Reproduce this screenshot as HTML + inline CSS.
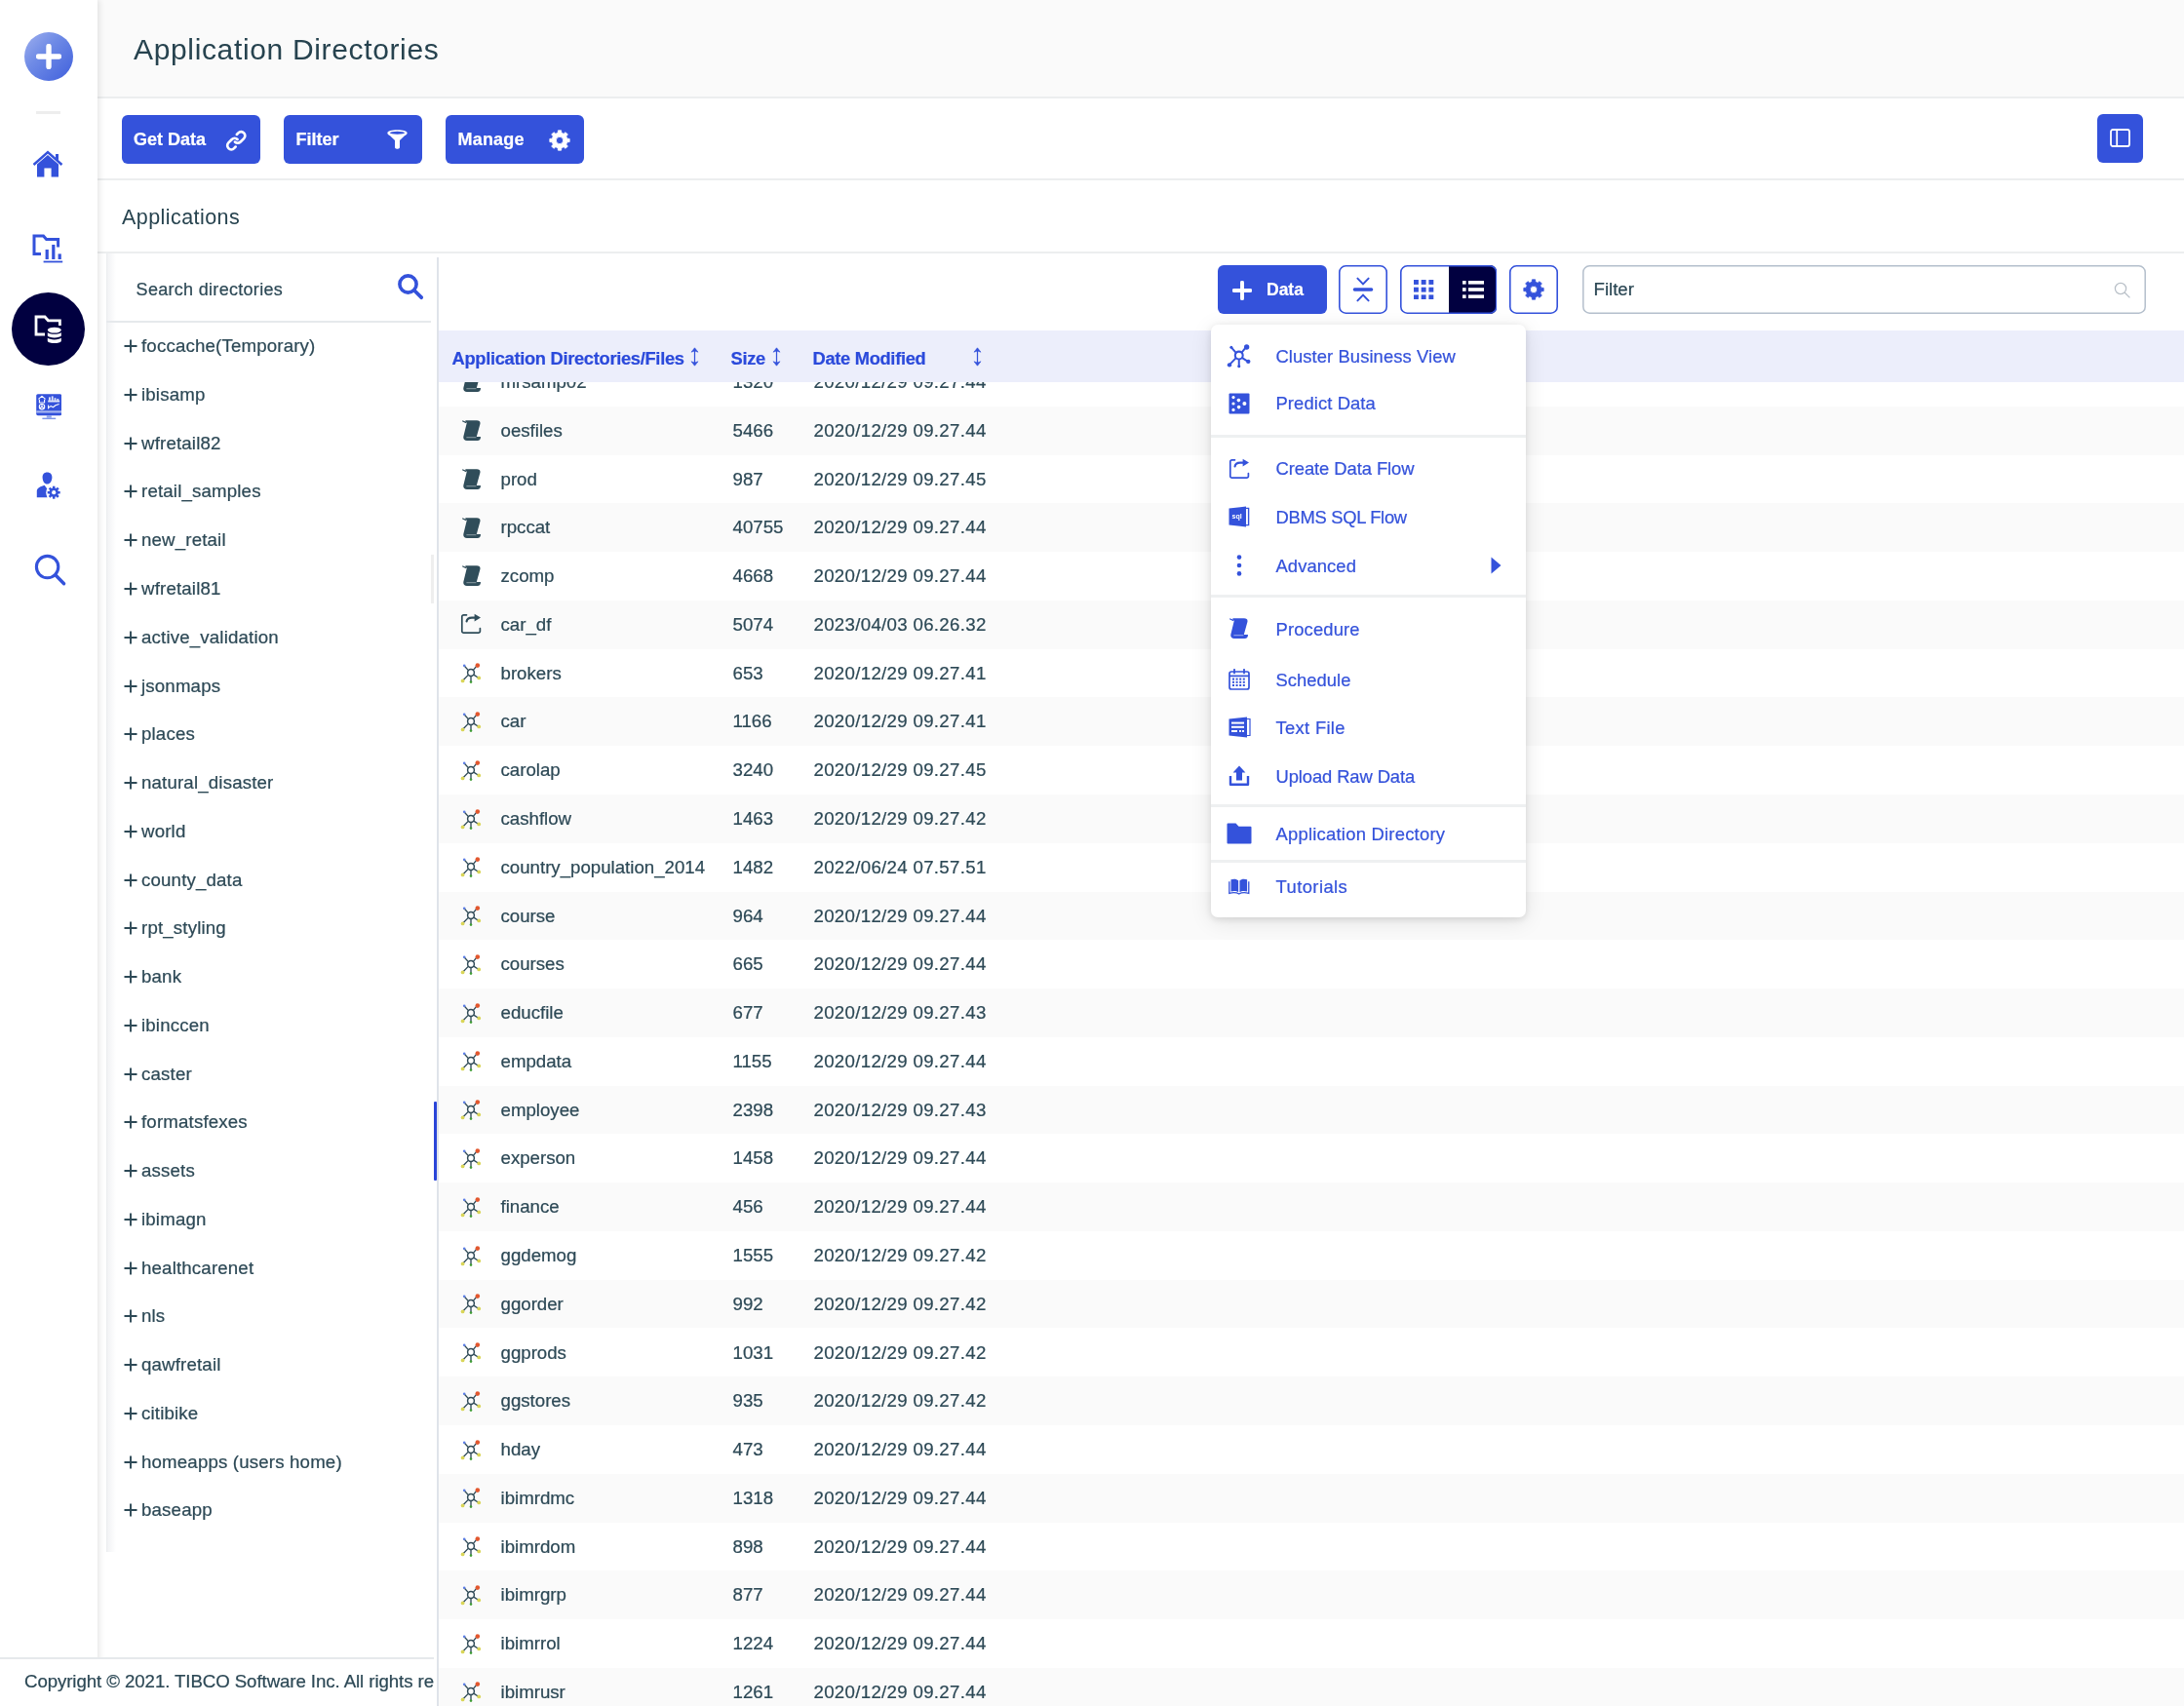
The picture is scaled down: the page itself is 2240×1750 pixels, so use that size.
<!DOCTYPE html><html><head><meta charset="utf-8"><title>Application Directories</title><style>

*{box-sizing:border-box;margin:0;padding:0}
html,body{width:2240px;height:1750px;overflow:hidden;background:#fff}
body{position:relative;will-change:transform;-webkit-text-stroke:0.22px;font-family:"Liberation Sans",sans-serif;color:#2d4956;font-size:18px}
.abs{position:absolute}
#side{left:0;top:0;width:100px;height:1750px;background:#fff;box-shadow:2px 0 6px rgba(0,0,0,.10);z-index:5}
#hdr{left:100px;top:0;width:2140px;height:101px;background:#fafafa;border-bottom:2px solid #eceeef}
#hdr h1{-webkit-text-stroke:0;position:absolute;left:37px;top:33px;font-weight:400;font-size:30px;line-height:36px;color:#27434f;letter-spacing:0.65px;white-space:nowrap}
#tb{left:100px;top:101px;width:2140px;height:84px;border-bottom:2px solid #eceeef;background:#fff}
.bbtn{position:absolute;top:17px;height:50px;width:142px;border-radius:6px;background:#3452db;color:#fff;font-weight:700;font-size:18px;line-height:51px;padding-left:12.5px;white-space:nowrap}
.bbtn svg{position:absolute;right:12px;top:13px}
#apps{left:100px;top:185px;width:2140px;height:75px;border-bottom:2px solid #eceeef;background:#fff}
#apps span{-webkit-text-stroke:0;position:absolute;left:25px;top:24px;font-size:21.5px;line-height:28px;white-space:nowrap;letter-spacing:0.43px;color:#27434f}
#tree{left:109px;top:260px;width:338px;height:1332px;background:#fff;border-left:1px solid #eceef0;background:linear-gradient(90deg,#f1f2f4 0,#fff 9px)}
#srch{position:absolute;left:-1px;top:0;width:333px;height:71px;border-bottom:2px solid #e6e9ec}
#srch span{position:absolute;left:30.6px;top:24.7px;font-size:18px;line-height:24px;white-space:nowrap;letter-spacing:0.3px}
.ti{position:absolute;left:17px;height:30px;line-height:30px;font-size:18.67px;white-space:nowrap;letter-spacing:0.17px}
.ti svg{position:absolute;left:0;top:8px}
.ti b{font-weight:400;position:absolute;left:18px;top:0}
#vdiv{left:448px;top:264px;width:2px;height:1486px;background:#dfe3ea}
#hand{left:444.5px;top:1130px;width:3.5px;height:81px;background:#2a45d8;border-radius:1px}
#thumb{left:441.5px;top:569px;width:3.5px;height:50px;background:#eeeeee}
#tbl{left:450px;top:339px;width:1790px;height:1411px;overflow:hidden}
#th{position:absolute;left:0;top:0;width:1790px;height:52.5px;background:#eceefb;z-index:2;color:#2b4adb;font-weight:700;font-size:18.3px;letter-spacing:-0.3px}
#th span{position:absolute;top:17px;line-height:24px;white-space:nowrap}
#th .sort{position:absolute;top:16.8px}
.r{position:absolute;left:0;width:1790px;height:49.77px;font-size:18.67px}
.r.g{background:#fafafa}
.r span{position:absolute;top:0;line-height:49.77px;white-space:nowrap}
.r .ic{position:absolute}
.c1{left:63.5px} .c2{left:301.5px} .c3{left:384.5px;letter-spacing:0.31px}
#foot{left:0;top:1699.5px;width:445px;height:51px;background:#fff;border-top:2px solid #e6e9ec;z-index:6;overflow:hidden}
#foot span{position:absolute;left:25px;top:12.6px;font-size:18.67px;line-height:22px;white-space:nowrap;letter-spacing:-0.08px}
.tbtn{position:absolute;top:272px;height:50px;border-radius:6px}
#menu{left:1241.5px;top:333px;width:323.5px;height:607.5px;background:#fff;border-radius:7px;box-shadow:0 4px 22px rgba(0,0,0,.10),0 2px 7px rgba(0,0,0,.10);z-index:10;color:#3452db;font-size:18.4px}
#menu .mi{position:absolute;left:67px;line-height:26px;white-space:nowrap}
#menu .sep{position:absolute;left:0;width:100%;height:3px;background:#eef0f1}
#menu svg{position:absolute}

</style></head><body>
<div id="hdr" class="abs"><h1>Application Directories</h1></div>
<div id="tb" class="abs">
<div class="bbtn" style="left:24.5px">Get Data<svg width="22.5" height="22.5" viewBox="0 0 26 26" style="top:14.5px;right:13.5px"><g fill="none" stroke="#fff" stroke-width="3.1" stroke-linecap="round"><path d="M11.5 14.5 a4.6 4.6 0 0 0 6.6 0 l4 -4 a4.6 4.6 0 0 0 -6.6 -6.6 l-1.8 1.8"/><path d="M14.5 11.5 a4.6 4.6 0 0 0 -6.6 0 l-4 4 a4.6 4.6 0 0 0 6.6 6.6 l1.8 -1.8"/></g></svg></div>
<div class="bbtn" style="left:191px">Filter<svg width="23" height="22" viewBox="0 0 26 26" preserveAspectRatio="none" style="top:14px;right:14px"><path fill="#fff" d="M1.5 5.2 C1.5 2.6 6.6 1.4 13 1.4 S24.5 2.6 24.5 5.2 C24.5 6.6 23 7.6 21.4 8.6 L15.8 14.2 V22.6 C15.8 23.8 14.8 24.6 13.6 24.6 H12.4 C11.2 24.6 10.2 23.8 10.2 22.6 V14.2 L4.6 8.6 C3 7.6 1.5 6.6 1.5 5.2 Z"/><ellipse cx="13" cy="5" rx="8.6" ry="1.7" fill="#3452db"/></svg></div>
<div class="bbtn" style="left:357px;letter-spacing:0.2px">Manage<svg class="abs" style="left:105.8px;top:14.5px" width="22" height="22" viewBox="0 0 22 22"><path fill="#fff" fill-rule="evenodd" stroke="#fff" stroke-width="0.8" stroke-linejoin="round" d="M9.15 3.30 L9.39 0.83 L12.61 0.83 L12.85 3.30 L15.14 4.25 L17.05 2.67 L19.33 4.95 L17.75 6.86 L18.70 9.15 L21.17 9.39 L21.17 12.61 L18.70 12.85 L17.75 15.14 L19.33 17.05 L17.05 19.33 L15.14 17.75 L12.85 18.70 L12.61 21.17 L9.39 21.17 L9.15 18.70 L6.86 17.75 L4.95 19.33 L2.67 17.05 L4.25 15.14 L3.30 12.85 L0.83 12.61 L0.83 9.39 L3.30 9.15 L4.25 6.86 L2.67 4.95 L4.95 2.67 L6.86 4.25 Z M7.36 11.00 a3.638 3.638 0 1 0 7.276 0 a3.638 3.638 0 1 0 -7.276 0 Z"/></svg></div>
<div class="abs" style="left:2051px;top:16px;width:47px;height:50px;border-radius:6px;background:#3452db"><svg class="abs" style="left:13px;top:15px" width="21" height="19" viewBox="0 0 21 19"><rect x="1" y="1" width="19" height="17" rx="2" fill="none" stroke="#fff" stroke-width="1.8"/><path d="M7.2 1 V18" stroke="#fff" stroke-width="1.8"/></svg></div>
</div>
<div id="apps" class="abs"><span>Applications</span></div>
<div id="tree" class="abs">
<div id="srch"><span>Search directories</span><svg class="abs" style="left:297.6px;top:19.8px" width="28" height="28" viewBox="0 0 28 28"><circle cx="11.5" cy="11.5" r="8.6" fill="none" stroke="#3452db" stroke-width="3.6"/><path d="M18 18 L25.2 25.2" stroke="#3452db" stroke-width="3.8" stroke-linecap="round"/></svg></div>
<div class="ti" style="top:80.2px"><svg width="14" height="14" viewBox="0 0 14 14"><path d="M7 0.5 V13.5 M0.5 7 H13.5" stroke="#2d4956" stroke-width="1.9" fill="none"/></svg><b>foccache(Temporary)</b></div>
<div class="ti" style="top:129.9px"><svg width="14" height="14" viewBox="0 0 14 14"><path d="M7 0.5 V13.5 M0.5 7 H13.5" stroke="#2d4956" stroke-width="1.9" fill="none"/></svg><b>ibisamp</b></div>
<div class="ti" style="top:179.7px"><svg width="14" height="14" viewBox="0 0 14 14"><path d="M7 0.5 V13.5 M0.5 7 H13.5" stroke="#2d4956" stroke-width="1.9" fill="none"/></svg><b>wfretail82</b></div>
<div class="ti" style="top:229.4px"><svg width="14" height="14" viewBox="0 0 14 14"><path d="M7 0.5 V13.5 M0.5 7 H13.5" stroke="#2d4956" stroke-width="1.9" fill="none"/></svg><b>retail_samples</b></div>
<div class="ti" style="top:279.2px"><svg width="14" height="14" viewBox="0 0 14 14"><path d="M7 0.5 V13.5 M0.5 7 H13.5" stroke="#2d4956" stroke-width="1.9" fill="none"/></svg><b>new_retail</b></div>
<div class="ti" style="top:329.0px"><svg width="14" height="14" viewBox="0 0 14 14"><path d="M7 0.5 V13.5 M0.5 7 H13.5" stroke="#2d4956" stroke-width="1.9" fill="none"/></svg><b>wfretail81</b></div>
<div class="ti" style="top:378.7px"><svg width="14" height="14" viewBox="0 0 14 14"><path d="M7 0.5 V13.5 M0.5 7 H13.5" stroke="#2d4956" stroke-width="1.9" fill="none"/></svg><b>active_validation</b></div>
<div class="ti" style="top:428.5px"><svg width="14" height="14" viewBox="0 0 14 14"><path d="M7 0.5 V13.5 M0.5 7 H13.5" stroke="#2d4956" stroke-width="1.9" fill="none"/></svg><b>jsonmaps</b></div>
<div class="ti" style="top:478.2px"><svg width="14" height="14" viewBox="0 0 14 14"><path d="M7 0.5 V13.5 M0.5 7 H13.5" stroke="#2d4956" stroke-width="1.9" fill="none"/></svg><b>places</b></div>
<div class="ti" style="top:528.0px"><svg width="14" height="14" viewBox="0 0 14 14"><path d="M7 0.5 V13.5 M0.5 7 H13.5" stroke="#2d4956" stroke-width="1.9" fill="none"/></svg><b>natural_disaster</b></div>
<div class="ti" style="top:577.7px"><svg width="14" height="14" viewBox="0 0 14 14"><path d="M7 0.5 V13.5 M0.5 7 H13.5" stroke="#2d4956" stroke-width="1.9" fill="none"/></svg><b>world</b></div>
<div class="ti" style="top:627.5px"><svg width="14" height="14" viewBox="0 0 14 14"><path d="M7 0.5 V13.5 M0.5 7 H13.5" stroke="#2d4956" stroke-width="1.9" fill="none"/></svg><b>county_data</b></div>
<div class="ti" style="top:677.2px"><svg width="14" height="14" viewBox="0 0 14 14"><path d="M7 0.5 V13.5 M0.5 7 H13.5" stroke="#2d4956" stroke-width="1.9" fill="none"/></svg><b>rpt_styling</b></div>
<div class="ti" style="top:727.0px"><svg width="14" height="14" viewBox="0 0 14 14"><path d="M7 0.5 V13.5 M0.5 7 H13.5" stroke="#2d4956" stroke-width="1.9" fill="none"/></svg><b>bank</b></div>
<div class="ti" style="top:776.7px"><svg width="14" height="14" viewBox="0 0 14 14"><path d="M7 0.5 V13.5 M0.5 7 H13.5" stroke="#2d4956" stroke-width="1.9" fill="none"/></svg><b>ibinccen</b></div>
<div class="ti" style="top:826.5px"><svg width="14" height="14" viewBox="0 0 14 14"><path d="M7 0.5 V13.5 M0.5 7 H13.5" stroke="#2d4956" stroke-width="1.9" fill="none"/></svg><b>caster</b></div>
<div class="ti" style="top:876.2px"><svg width="14" height="14" viewBox="0 0 14 14"><path d="M7 0.5 V13.5 M0.5 7 H13.5" stroke="#2d4956" stroke-width="1.9" fill="none"/></svg><b>formatsfexes</b></div>
<div class="ti" style="top:926.0px"><svg width="14" height="14" viewBox="0 0 14 14"><path d="M7 0.5 V13.5 M0.5 7 H13.5" stroke="#2d4956" stroke-width="1.9" fill="none"/></svg><b>assets</b></div>
<div class="ti" style="top:975.7px"><svg width="14" height="14" viewBox="0 0 14 14"><path d="M7 0.5 V13.5 M0.5 7 H13.5" stroke="#2d4956" stroke-width="1.9" fill="none"/></svg><b>ibimagn</b></div>
<div class="ti" style="top:1025.5px"><svg width="14" height="14" viewBox="0 0 14 14"><path d="M7 0.5 V13.5 M0.5 7 H13.5" stroke="#2d4956" stroke-width="1.9" fill="none"/></svg><b>healthcarenet</b></div>
<div class="ti" style="top:1075.2px"><svg width="14" height="14" viewBox="0 0 14 14"><path d="M7 0.5 V13.5 M0.5 7 H13.5" stroke="#2d4956" stroke-width="1.9" fill="none"/></svg><b>nls</b></div>
<div class="ti" style="top:1125.0px"><svg width="14" height="14" viewBox="0 0 14 14"><path d="M7 0.5 V13.5 M0.5 7 H13.5" stroke="#2d4956" stroke-width="1.9" fill="none"/></svg><b>qawfretail</b></div>
<div class="ti" style="top:1174.7px"><svg width="14" height="14" viewBox="0 0 14 14"><path d="M7 0.5 V13.5 M0.5 7 H13.5" stroke="#2d4956" stroke-width="1.9" fill="none"/></svg><b>citibike</b></div>
<div class="ti" style="top:1224.5px"><svg width="14" height="14" viewBox="0 0 14 14"><path d="M7 0.5 V13.5 M0.5 7 H13.5" stroke="#2d4956" stroke-width="1.9" fill="none"/></svg><b>homeapps (users home)</b></div>
<div class="ti" style="top:1274.2px"><svg width="14" height="14" viewBox="0 0 14 14"><path d="M7 0.5 V13.5 M0.5 7 H13.5" stroke="#2d4956" stroke-width="1.9" fill="none"/></svg><b>baseapp</b></div>
</div>
<div id="vdiv" class="abs"></div><div id="hand" class="abs"></div><div id="thumb" class="abs"></div>
<div id="tbl" class="abs">
<div id="th"><span style="left:13.5px">Application Directories/Files</span><svg class="sort" style="left:258.1px" width="9" height="20" viewBox="0 0 9 20"><path fill="none" stroke="#3452db" stroke-width="1.25" d="M4.5 2 V18"/><path fill="#3452db" stroke="#3452db" stroke-width="0.6" stroke-linejoin="round" d="M4.5 0.8 L8 5.2 L4.5 3.9 L1 5.2 Z M4.5 19.2 L8 14.8 L4.5 16.1 L1 14.8 Z"/></svg><span style="left:299.5px">Size</span><svg class="sort" style="left:341.9px" width="9" height="20" viewBox="0 0 9 20"><path fill="none" stroke="#3452db" stroke-width="1.25" d="M4.5 2 V18"/><path fill="#3452db" stroke="#3452db" stroke-width="0.6" stroke-linejoin="round" d="M4.5 0.8 L8 5.2 L4.5 3.9 L1 5.2 Z M4.5 19.2 L8 14.8 L4.5 16.1 L1 14.8 Z"/></svg><span style="left:383.5px">Date Modified</span><svg class="sort" style="left:547.5px" width="9" height="20" viewBox="0 0 9 20"><path fill="none" stroke="#3452db" stroke-width="1.25" d="M4.5 2 V18"/><path fill="#3452db" stroke="#3452db" stroke-width="0.6" stroke-linejoin="round" d="M4.5 0.8 L8 5.2 L4.5 3.9 L1 5.2 Z M4.5 19.2 L8 14.8 L4.5 16.1 L1 14.8 Z"/></svg></div>
<div class="r" style="top:28.10px"><svg class="ic" style="left:23.5px;top:14.2px" width="19.5" height="21.5" viewBox="0 0 19.5 21.5"><path fill="#304d5a" d="M3.4 0.3 H15 Q19.2 0.3 18.4 4 L14.8 17 H19 Q19 20.9 15.6 20.9 H5 Q0.6 20.9 1.4 16.6 L4.6 3.6 Q5 1.8 3.4 1.7 Z"/><path fill="none" stroke="#304d5a" stroke-width="1.3" stroke-linecap="round" d="M0.7 1.0 L3.8 2.3"/><path fill="none" stroke="#93a4ad" stroke-width="0.9" d="M4.4 17.7 L14.4 17.7"/></svg><span class="c1">mrsamp02</span><span class="c2">1320</span><span class="c3">2020/12/29 09.27.44</span></div>
<div class="r g" style="top:77.87px"><svg class="ic" style="left:23.5px;top:14.2px" width="19.5" height="21.5" viewBox="0 0 19.5 21.5"><path fill="#304d5a" d="M3.4 0.3 H15 Q19.2 0.3 18.4 4 L14.8 17 H19 Q19 20.9 15.6 20.9 H5 Q0.6 20.9 1.4 16.6 L4.6 3.6 Q5 1.8 3.4 1.7 Z"/><path fill="none" stroke="#304d5a" stroke-width="1.3" stroke-linecap="round" d="M0.7 1.0 L3.8 2.3"/><path fill="none" stroke="#93a4ad" stroke-width="0.9" d="M4.4 17.7 L14.4 17.7"/></svg><span class="c1">oesfiles</span><span class="c2">5466</span><span class="c3">2020/12/29 09.27.44</span></div>
<div class="r" style="top:127.64px"><svg class="ic" style="left:23.5px;top:14.2px" width="19.5" height="21.5" viewBox="0 0 19.5 21.5"><path fill="#304d5a" d="M3.4 0.3 H15 Q19.2 0.3 18.4 4 L14.8 17 H19 Q19 20.9 15.6 20.9 H5 Q0.6 20.9 1.4 16.6 L4.6 3.6 Q5 1.8 3.4 1.7 Z"/><path fill="none" stroke="#304d5a" stroke-width="1.3" stroke-linecap="round" d="M0.7 1.0 L3.8 2.3"/><path fill="none" stroke="#93a4ad" stroke-width="0.9" d="M4.4 17.7 L14.4 17.7"/></svg><span class="c1">prod</span><span class="c2">987</span><span class="c3">2020/12/29 09.27.45</span></div>
<div class="r g" style="top:177.41px"><svg class="ic" style="left:23.5px;top:14.2px" width="19.5" height="21.5" viewBox="0 0 19.5 21.5"><path fill="#304d5a" d="M3.4 0.3 H15 Q19.2 0.3 18.4 4 L14.8 17 H19 Q19 20.9 15.6 20.9 H5 Q0.6 20.9 1.4 16.6 L4.6 3.6 Q5 1.8 3.4 1.7 Z"/><path fill="none" stroke="#304d5a" stroke-width="1.3" stroke-linecap="round" d="M0.7 1.0 L3.8 2.3"/><path fill="none" stroke="#93a4ad" stroke-width="0.9" d="M4.4 17.7 L14.4 17.7"/></svg><span class="c1">rpccat</span><span class="c2">40755</span><span class="c3">2020/12/29 09.27.44</span></div>
<div class="r" style="top:227.18px"><svg class="ic" style="left:23.5px;top:14.2px" width="19.5" height="21.5" viewBox="0 0 19.5 21.5"><path fill="#304d5a" d="M3.4 0.3 H15 Q19.2 0.3 18.4 4 L14.8 17 H19 Q19 20.9 15.6 20.9 H5 Q0.6 20.9 1.4 16.6 L4.6 3.6 Q5 1.8 3.4 1.7 Z"/><path fill="none" stroke="#304d5a" stroke-width="1.3" stroke-linecap="round" d="M0.7 1.0 L3.8 2.3"/><path fill="none" stroke="#93a4ad" stroke-width="0.9" d="M4.4 17.7 L14.4 17.7"/></svg><span class="c1">zcomp</span><span class="c2">4668</span><span class="c3">2020/12/29 09.27.44</span></div>
<div class="r g" style="top:276.95px"><svg class="ic" style="left:22px;top:13.4px" width="22" height="22" viewBox="0 0 22 22"><path fill="none" stroke="#304d5a" stroke-width="1.7" stroke-linecap="round" stroke-linejoin="round" d="M6.5 1.8 H3.6 A1.8 1.8 0 0 0 1.8 3.6 V18.4 A1.8 1.8 0 0 0 3.6 20.2 H18.6 A1.8 1.8 0 0 0 20.4 18.4 V15.6"/><path fill="none" stroke="#304d5a" stroke-width="2.2" stroke-linecap="round" d="M6.6 8.4 C7 5.6 9 4.6 12 4.6 H16"/><path fill="#304d5a" d="M14.6 0.8 L21 4.6 L14.6 8.4 Z"/></svg><span class="c1">car_df</span><span class="c2">5074</span><span class="c3">2023/04/03 06.26.32</span></div>
<div class="r" style="top:326.72px"><svg class="ic" style="left:22.2px;top:14.6px" width="22" height="22" viewBox="0 0 22 22"><g stroke="#2f4a57" stroke-width="1.35" stroke-linecap="round" fill="none"><path d="M4.4 3.2 L8.4 7.6 M17.4 2.4 L13.4 7.4 M14.2 12.4 L18.6 15.2 M11 14 L11 19.4 M8 12.6 L2.8 18"/><circle cx="11" cy="10" r="3.4" stroke-width="1.5"/></g><circle cx="4.2" cy="2.8" r="1.3" fill="#5b7de6"/><circle cx="17.8" cy="2.6" r="2.3" fill="#e2572e"/><circle cx="19.2" cy="15.4" r="1.9" fill="#d9d558"/><circle cx="11" cy="19.6" r="1.3" fill="#3f9d36"/><circle cx="2.6" cy="18.4" r="1.9" fill="#d9d558"/></svg><span class="c1">brokers</span><span class="c2">653</span><span class="c3">2020/12/29 09.27.41</span></div>
<div class="r g" style="top:376.49px"><svg class="ic" style="left:22.2px;top:14.6px" width="22" height="22" viewBox="0 0 22 22"><g stroke="#2f4a57" stroke-width="1.35" stroke-linecap="round" fill="none"><path d="M4.4 3.2 L8.4 7.6 M17.4 2.4 L13.4 7.4 M14.2 12.4 L18.6 15.2 M11 14 L11 19.4 M8 12.6 L2.8 18"/><circle cx="11" cy="10" r="3.4" stroke-width="1.5"/></g><circle cx="4.2" cy="2.8" r="1.3" fill="#5b7de6"/><circle cx="17.8" cy="2.6" r="2.3" fill="#e2572e"/><circle cx="19.2" cy="15.4" r="1.9" fill="#d9d558"/><circle cx="11" cy="19.6" r="1.3" fill="#3f9d36"/><circle cx="2.6" cy="18.4" r="1.9" fill="#d9d558"/></svg><span class="c1">car</span><span class="c2">1166</span><span class="c3">2020/12/29 09.27.41</span></div>
<div class="r" style="top:426.26px"><svg class="ic" style="left:22.2px;top:14.6px" width="22" height="22" viewBox="0 0 22 22"><g stroke="#2f4a57" stroke-width="1.35" stroke-linecap="round" fill="none"><path d="M4.4 3.2 L8.4 7.6 M17.4 2.4 L13.4 7.4 M14.2 12.4 L18.6 15.2 M11 14 L11 19.4 M8 12.6 L2.8 18"/><circle cx="11" cy="10" r="3.4" stroke-width="1.5"/></g><circle cx="4.2" cy="2.8" r="1.3" fill="#5b7de6"/><circle cx="17.8" cy="2.6" r="2.3" fill="#e2572e"/><circle cx="19.2" cy="15.4" r="1.9" fill="#d9d558"/><circle cx="11" cy="19.6" r="1.3" fill="#3f9d36"/><circle cx="2.6" cy="18.4" r="1.9" fill="#d9d558"/></svg><span class="c1">carolap</span><span class="c2">3240</span><span class="c3">2020/12/29 09.27.45</span></div>
<div class="r g" style="top:476.03px"><svg class="ic" style="left:22.2px;top:14.6px" width="22" height="22" viewBox="0 0 22 22"><g stroke="#2f4a57" stroke-width="1.35" stroke-linecap="round" fill="none"><path d="M4.4 3.2 L8.4 7.6 M17.4 2.4 L13.4 7.4 M14.2 12.4 L18.6 15.2 M11 14 L11 19.4 M8 12.6 L2.8 18"/><circle cx="11" cy="10" r="3.4" stroke-width="1.5"/></g><circle cx="4.2" cy="2.8" r="1.3" fill="#5b7de6"/><circle cx="17.8" cy="2.6" r="2.3" fill="#e2572e"/><circle cx="19.2" cy="15.4" r="1.9" fill="#d9d558"/><circle cx="11" cy="19.6" r="1.3" fill="#3f9d36"/><circle cx="2.6" cy="18.4" r="1.9" fill="#d9d558"/></svg><span class="c1">cashflow</span><span class="c2">1463</span><span class="c3">2020/12/29 09.27.42</span></div>
<div class="r" style="top:525.80px"><svg class="ic" style="left:22.2px;top:14.6px" width="22" height="22" viewBox="0 0 22 22"><g stroke="#2f4a57" stroke-width="1.35" stroke-linecap="round" fill="none"><path d="M4.4 3.2 L8.4 7.6 M17.4 2.4 L13.4 7.4 M14.2 12.4 L18.6 15.2 M11 14 L11 19.4 M8 12.6 L2.8 18"/><circle cx="11" cy="10" r="3.4" stroke-width="1.5"/></g><circle cx="4.2" cy="2.8" r="1.3" fill="#5b7de6"/><circle cx="17.8" cy="2.6" r="2.3" fill="#e2572e"/><circle cx="19.2" cy="15.4" r="1.9" fill="#d9d558"/><circle cx="11" cy="19.6" r="1.3" fill="#3f9d36"/><circle cx="2.6" cy="18.4" r="1.9" fill="#d9d558"/></svg><span class="c1">country_population_2014</span><span class="c2">1482</span><span class="c3">2022/06/24 07.57.51</span></div>
<div class="r g" style="top:575.57px"><svg class="ic" style="left:22.2px;top:14.6px" width="22" height="22" viewBox="0 0 22 22"><g stroke="#2f4a57" stroke-width="1.35" stroke-linecap="round" fill="none"><path d="M4.4 3.2 L8.4 7.6 M17.4 2.4 L13.4 7.4 M14.2 12.4 L18.6 15.2 M11 14 L11 19.4 M8 12.6 L2.8 18"/><circle cx="11" cy="10" r="3.4" stroke-width="1.5"/></g><circle cx="4.2" cy="2.8" r="1.3" fill="#5b7de6"/><circle cx="17.8" cy="2.6" r="2.3" fill="#e2572e"/><circle cx="19.2" cy="15.4" r="1.9" fill="#d9d558"/><circle cx="11" cy="19.6" r="1.3" fill="#3f9d36"/><circle cx="2.6" cy="18.4" r="1.9" fill="#d9d558"/></svg><span class="c1">course</span><span class="c2">964</span><span class="c3">2020/12/29 09.27.44</span></div>
<div class="r" style="top:625.34px"><svg class="ic" style="left:22.2px;top:14.6px" width="22" height="22" viewBox="0 0 22 22"><g stroke="#2f4a57" stroke-width="1.35" stroke-linecap="round" fill="none"><path d="M4.4 3.2 L8.4 7.6 M17.4 2.4 L13.4 7.4 M14.2 12.4 L18.6 15.2 M11 14 L11 19.4 M8 12.6 L2.8 18"/><circle cx="11" cy="10" r="3.4" stroke-width="1.5"/></g><circle cx="4.2" cy="2.8" r="1.3" fill="#5b7de6"/><circle cx="17.8" cy="2.6" r="2.3" fill="#e2572e"/><circle cx="19.2" cy="15.4" r="1.9" fill="#d9d558"/><circle cx="11" cy="19.6" r="1.3" fill="#3f9d36"/><circle cx="2.6" cy="18.4" r="1.9" fill="#d9d558"/></svg><span class="c1">courses</span><span class="c2">665</span><span class="c3">2020/12/29 09.27.44</span></div>
<div class="r g" style="top:675.11px"><svg class="ic" style="left:22.2px;top:14.6px" width="22" height="22" viewBox="0 0 22 22"><g stroke="#2f4a57" stroke-width="1.35" stroke-linecap="round" fill="none"><path d="M4.4 3.2 L8.4 7.6 M17.4 2.4 L13.4 7.4 M14.2 12.4 L18.6 15.2 M11 14 L11 19.4 M8 12.6 L2.8 18"/><circle cx="11" cy="10" r="3.4" stroke-width="1.5"/></g><circle cx="4.2" cy="2.8" r="1.3" fill="#5b7de6"/><circle cx="17.8" cy="2.6" r="2.3" fill="#e2572e"/><circle cx="19.2" cy="15.4" r="1.9" fill="#d9d558"/><circle cx="11" cy="19.6" r="1.3" fill="#3f9d36"/><circle cx="2.6" cy="18.4" r="1.9" fill="#d9d558"/></svg><span class="c1">educfile</span><span class="c2">677</span><span class="c3">2020/12/29 09.27.43</span></div>
<div class="r" style="top:724.88px"><svg class="ic" style="left:22.2px;top:14.6px" width="22" height="22" viewBox="0 0 22 22"><g stroke="#2f4a57" stroke-width="1.35" stroke-linecap="round" fill="none"><path d="M4.4 3.2 L8.4 7.6 M17.4 2.4 L13.4 7.4 M14.2 12.4 L18.6 15.2 M11 14 L11 19.4 M8 12.6 L2.8 18"/><circle cx="11" cy="10" r="3.4" stroke-width="1.5"/></g><circle cx="4.2" cy="2.8" r="1.3" fill="#5b7de6"/><circle cx="17.8" cy="2.6" r="2.3" fill="#e2572e"/><circle cx="19.2" cy="15.4" r="1.9" fill="#d9d558"/><circle cx="11" cy="19.6" r="1.3" fill="#3f9d36"/><circle cx="2.6" cy="18.4" r="1.9" fill="#d9d558"/></svg><span class="c1">empdata</span><span class="c2">1155</span><span class="c3">2020/12/29 09.27.44</span></div>
<div class="r g" style="top:774.65px"><svg class="ic" style="left:22.2px;top:14.6px" width="22" height="22" viewBox="0 0 22 22"><g stroke="#2f4a57" stroke-width="1.35" stroke-linecap="round" fill="none"><path d="M4.4 3.2 L8.4 7.6 M17.4 2.4 L13.4 7.4 M14.2 12.4 L18.6 15.2 M11 14 L11 19.4 M8 12.6 L2.8 18"/><circle cx="11" cy="10" r="3.4" stroke-width="1.5"/></g><circle cx="4.2" cy="2.8" r="1.3" fill="#5b7de6"/><circle cx="17.8" cy="2.6" r="2.3" fill="#e2572e"/><circle cx="19.2" cy="15.4" r="1.9" fill="#d9d558"/><circle cx="11" cy="19.6" r="1.3" fill="#3f9d36"/><circle cx="2.6" cy="18.4" r="1.9" fill="#d9d558"/></svg><span class="c1">employee</span><span class="c2">2398</span><span class="c3">2020/12/29 09.27.43</span></div>
<div class="r" style="top:824.42px"><svg class="ic" style="left:22.2px;top:14.6px" width="22" height="22" viewBox="0 0 22 22"><g stroke="#2f4a57" stroke-width="1.35" stroke-linecap="round" fill="none"><path d="M4.4 3.2 L8.4 7.6 M17.4 2.4 L13.4 7.4 M14.2 12.4 L18.6 15.2 M11 14 L11 19.4 M8 12.6 L2.8 18"/><circle cx="11" cy="10" r="3.4" stroke-width="1.5"/></g><circle cx="4.2" cy="2.8" r="1.3" fill="#5b7de6"/><circle cx="17.8" cy="2.6" r="2.3" fill="#e2572e"/><circle cx="19.2" cy="15.4" r="1.9" fill="#d9d558"/><circle cx="11" cy="19.6" r="1.3" fill="#3f9d36"/><circle cx="2.6" cy="18.4" r="1.9" fill="#d9d558"/></svg><span class="c1">experson</span><span class="c2">1458</span><span class="c3">2020/12/29 09.27.44</span></div>
<div class="r g" style="top:874.19px"><svg class="ic" style="left:22.2px;top:14.6px" width="22" height="22" viewBox="0 0 22 22"><g stroke="#2f4a57" stroke-width="1.35" stroke-linecap="round" fill="none"><path d="M4.4 3.2 L8.4 7.6 M17.4 2.4 L13.4 7.4 M14.2 12.4 L18.6 15.2 M11 14 L11 19.4 M8 12.6 L2.8 18"/><circle cx="11" cy="10" r="3.4" stroke-width="1.5"/></g><circle cx="4.2" cy="2.8" r="1.3" fill="#5b7de6"/><circle cx="17.8" cy="2.6" r="2.3" fill="#e2572e"/><circle cx="19.2" cy="15.4" r="1.9" fill="#d9d558"/><circle cx="11" cy="19.6" r="1.3" fill="#3f9d36"/><circle cx="2.6" cy="18.4" r="1.9" fill="#d9d558"/></svg><span class="c1">finance</span><span class="c2">456</span><span class="c3">2020/12/29 09.27.44</span></div>
<div class="r" style="top:923.96px"><svg class="ic" style="left:22.2px;top:14.6px" width="22" height="22" viewBox="0 0 22 22"><g stroke="#2f4a57" stroke-width="1.35" stroke-linecap="round" fill="none"><path d="M4.4 3.2 L8.4 7.6 M17.4 2.4 L13.4 7.4 M14.2 12.4 L18.6 15.2 M11 14 L11 19.4 M8 12.6 L2.8 18"/><circle cx="11" cy="10" r="3.4" stroke-width="1.5"/></g><circle cx="4.2" cy="2.8" r="1.3" fill="#5b7de6"/><circle cx="17.8" cy="2.6" r="2.3" fill="#e2572e"/><circle cx="19.2" cy="15.4" r="1.9" fill="#d9d558"/><circle cx="11" cy="19.6" r="1.3" fill="#3f9d36"/><circle cx="2.6" cy="18.4" r="1.9" fill="#d9d558"/></svg><span class="c1">ggdemog</span><span class="c2">1555</span><span class="c3">2020/12/29 09.27.42</span></div>
<div class="r g" style="top:973.73px"><svg class="ic" style="left:22.2px;top:14.6px" width="22" height="22" viewBox="0 0 22 22"><g stroke="#2f4a57" stroke-width="1.35" stroke-linecap="round" fill="none"><path d="M4.4 3.2 L8.4 7.6 M17.4 2.4 L13.4 7.4 M14.2 12.4 L18.6 15.2 M11 14 L11 19.4 M8 12.6 L2.8 18"/><circle cx="11" cy="10" r="3.4" stroke-width="1.5"/></g><circle cx="4.2" cy="2.8" r="1.3" fill="#5b7de6"/><circle cx="17.8" cy="2.6" r="2.3" fill="#e2572e"/><circle cx="19.2" cy="15.4" r="1.9" fill="#d9d558"/><circle cx="11" cy="19.6" r="1.3" fill="#3f9d36"/><circle cx="2.6" cy="18.4" r="1.9" fill="#d9d558"/></svg><span class="c1">ggorder</span><span class="c2">992</span><span class="c3">2020/12/29 09.27.42</span></div>
<div class="r" style="top:1023.50px"><svg class="ic" style="left:22.2px;top:14.6px" width="22" height="22" viewBox="0 0 22 22"><g stroke="#2f4a57" stroke-width="1.35" stroke-linecap="round" fill="none"><path d="M4.4 3.2 L8.4 7.6 M17.4 2.4 L13.4 7.4 M14.2 12.4 L18.6 15.2 M11 14 L11 19.4 M8 12.6 L2.8 18"/><circle cx="11" cy="10" r="3.4" stroke-width="1.5"/></g><circle cx="4.2" cy="2.8" r="1.3" fill="#5b7de6"/><circle cx="17.8" cy="2.6" r="2.3" fill="#e2572e"/><circle cx="19.2" cy="15.4" r="1.9" fill="#d9d558"/><circle cx="11" cy="19.6" r="1.3" fill="#3f9d36"/><circle cx="2.6" cy="18.4" r="1.9" fill="#d9d558"/></svg><span class="c1">ggprods</span><span class="c2">1031</span><span class="c3">2020/12/29 09.27.42</span></div>
<div class="r g" style="top:1073.27px"><svg class="ic" style="left:22.2px;top:14.6px" width="22" height="22" viewBox="0 0 22 22"><g stroke="#2f4a57" stroke-width="1.35" stroke-linecap="round" fill="none"><path d="M4.4 3.2 L8.4 7.6 M17.4 2.4 L13.4 7.4 M14.2 12.4 L18.6 15.2 M11 14 L11 19.4 M8 12.6 L2.8 18"/><circle cx="11" cy="10" r="3.4" stroke-width="1.5"/></g><circle cx="4.2" cy="2.8" r="1.3" fill="#5b7de6"/><circle cx="17.8" cy="2.6" r="2.3" fill="#e2572e"/><circle cx="19.2" cy="15.4" r="1.9" fill="#d9d558"/><circle cx="11" cy="19.6" r="1.3" fill="#3f9d36"/><circle cx="2.6" cy="18.4" r="1.9" fill="#d9d558"/></svg><span class="c1">ggstores</span><span class="c2">935</span><span class="c3">2020/12/29 09.27.42</span></div>
<div class="r" style="top:1123.04px"><svg class="ic" style="left:22.2px;top:14.6px" width="22" height="22" viewBox="0 0 22 22"><g stroke="#2f4a57" stroke-width="1.35" stroke-linecap="round" fill="none"><path d="M4.4 3.2 L8.4 7.6 M17.4 2.4 L13.4 7.4 M14.2 12.4 L18.6 15.2 M11 14 L11 19.4 M8 12.6 L2.8 18"/><circle cx="11" cy="10" r="3.4" stroke-width="1.5"/></g><circle cx="4.2" cy="2.8" r="1.3" fill="#5b7de6"/><circle cx="17.8" cy="2.6" r="2.3" fill="#e2572e"/><circle cx="19.2" cy="15.4" r="1.9" fill="#d9d558"/><circle cx="11" cy="19.6" r="1.3" fill="#3f9d36"/><circle cx="2.6" cy="18.4" r="1.9" fill="#d9d558"/></svg><span class="c1">hday</span><span class="c2">473</span><span class="c3">2020/12/29 09.27.44</span></div>
<div class="r g" style="top:1172.81px"><svg class="ic" style="left:22.2px;top:14.6px" width="22" height="22" viewBox="0 0 22 22"><g stroke="#2f4a57" stroke-width="1.35" stroke-linecap="round" fill="none"><path d="M4.4 3.2 L8.4 7.6 M17.4 2.4 L13.4 7.4 M14.2 12.4 L18.6 15.2 M11 14 L11 19.4 M8 12.6 L2.8 18"/><circle cx="11" cy="10" r="3.4" stroke-width="1.5"/></g><circle cx="4.2" cy="2.8" r="1.3" fill="#5b7de6"/><circle cx="17.8" cy="2.6" r="2.3" fill="#e2572e"/><circle cx="19.2" cy="15.4" r="1.9" fill="#d9d558"/><circle cx="11" cy="19.6" r="1.3" fill="#3f9d36"/><circle cx="2.6" cy="18.4" r="1.9" fill="#d9d558"/></svg><span class="c1">ibimrdmc</span><span class="c2">1318</span><span class="c3">2020/12/29 09.27.44</span></div>
<div class="r" style="top:1222.58px"><svg class="ic" style="left:22.2px;top:14.6px" width="22" height="22" viewBox="0 0 22 22"><g stroke="#2f4a57" stroke-width="1.35" stroke-linecap="round" fill="none"><path d="M4.4 3.2 L8.4 7.6 M17.4 2.4 L13.4 7.4 M14.2 12.4 L18.6 15.2 M11 14 L11 19.4 M8 12.6 L2.8 18"/><circle cx="11" cy="10" r="3.4" stroke-width="1.5"/></g><circle cx="4.2" cy="2.8" r="1.3" fill="#5b7de6"/><circle cx="17.8" cy="2.6" r="2.3" fill="#e2572e"/><circle cx="19.2" cy="15.4" r="1.9" fill="#d9d558"/><circle cx="11" cy="19.6" r="1.3" fill="#3f9d36"/><circle cx="2.6" cy="18.4" r="1.9" fill="#d9d558"/></svg><span class="c1">ibimrdom</span><span class="c2">898</span><span class="c3">2020/12/29 09.27.44</span></div>
<div class="r g" style="top:1272.35px"><svg class="ic" style="left:22.2px;top:14.6px" width="22" height="22" viewBox="0 0 22 22"><g stroke="#2f4a57" stroke-width="1.35" stroke-linecap="round" fill="none"><path d="M4.4 3.2 L8.4 7.6 M17.4 2.4 L13.4 7.4 M14.2 12.4 L18.6 15.2 M11 14 L11 19.4 M8 12.6 L2.8 18"/><circle cx="11" cy="10" r="3.4" stroke-width="1.5"/></g><circle cx="4.2" cy="2.8" r="1.3" fill="#5b7de6"/><circle cx="17.8" cy="2.6" r="2.3" fill="#e2572e"/><circle cx="19.2" cy="15.4" r="1.9" fill="#d9d558"/><circle cx="11" cy="19.6" r="1.3" fill="#3f9d36"/><circle cx="2.6" cy="18.4" r="1.9" fill="#d9d558"/></svg><span class="c1">ibimrgrp</span><span class="c2">877</span><span class="c3">2020/12/29 09.27.44</span></div>
<div class="r" style="top:1322.12px"><svg class="ic" style="left:22.2px;top:14.6px" width="22" height="22" viewBox="0 0 22 22"><g stroke="#2f4a57" stroke-width="1.35" stroke-linecap="round" fill="none"><path d="M4.4 3.2 L8.4 7.6 M17.4 2.4 L13.4 7.4 M14.2 12.4 L18.6 15.2 M11 14 L11 19.4 M8 12.6 L2.8 18"/><circle cx="11" cy="10" r="3.4" stroke-width="1.5"/></g><circle cx="4.2" cy="2.8" r="1.3" fill="#5b7de6"/><circle cx="17.8" cy="2.6" r="2.3" fill="#e2572e"/><circle cx="19.2" cy="15.4" r="1.9" fill="#d9d558"/><circle cx="11" cy="19.6" r="1.3" fill="#3f9d36"/><circle cx="2.6" cy="18.4" r="1.9" fill="#d9d558"/></svg><span class="c1">ibimrrol</span><span class="c2">1224</span><span class="c3">2020/12/29 09.27.44</span></div>
<div class="r g" style="top:1371.89px"><svg class="ic" style="left:22.2px;top:14.6px" width="22" height="22" viewBox="0 0 22 22"><g stroke="#2f4a57" stroke-width="1.35" stroke-linecap="round" fill="none"><path d="M4.4 3.2 L8.4 7.6 M17.4 2.4 L13.4 7.4 M14.2 12.4 L18.6 15.2 M11 14 L11 19.4 M8 12.6 L2.8 18"/><circle cx="11" cy="10" r="3.4" stroke-width="1.5"/></g><circle cx="4.2" cy="2.8" r="1.3" fill="#5b7de6"/><circle cx="17.8" cy="2.6" r="2.3" fill="#e2572e"/><circle cx="19.2" cy="15.4" r="1.9" fill="#d9d558"/><circle cx="11" cy="19.6" r="1.3" fill="#3f9d36"/><circle cx="2.6" cy="18.4" r="1.9" fill="#d9d558"/></svg><span class="c1">ibimrusr</span><span class="c2">1261</span><span class="c3">2020/12/29 09.27.44</span></div>
</div>
<div class="tbtn" style="left:1249px;width:112px;background:#3452db;color:#fff;font-weight:700;font-size:17.5px;line-height:50px"><svg class="abs" style="left:15px;top:15.5px" width="20" height="20" viewBox="0 0 20 20"><path d="M10 1.7 V18.3 M1.7 10 H18.3" stroke="#fff" stroke-width="3.9" stroke-linecap="round"/></svg><span class="abs" style="left:50px;top:0">Data</span></div>
<div class="tbtn" style="left:1373px;width:50px;border:2px solid transparent;background:#fff"><svg class="abs" style="left:-2px;top:-2px" width="50" height="50" viewBox="0 0 50 50"><rect x="0.8" y="0.8" width="48.4" height="48.4" rx="6.5" fill="none" stroke="#3452db" stroke-width="1.6"/></svg><svg class="abs" style="left:12px;top:9px" width="22" height="28" viewBox="0 0 22 28"><g fill="none" stroke="#3452db" stroke-linecap="round" stroke-linejoin="miter"><path stroke-width="3.4" d="M2.4 14 H19.6"/><path stroke-width="2" d="M5.4 2.6 L11 8.4 L16.6 2.6 M5.4 25.4 L11 19.6 L16.6 25.4"/></g></svg></div>
<div class="tbtn" style="left:1435.5px;width:99.5px;border:2px solid transparent;background:#fff"><div class="abs" style="left:48px;top:-2px;width:49.5px;height:50px;background:#010040;border-radius:0 6.5px 6.5px 0"></div><svg class="abs" style="left:-2px;top:-2px" width="99.5" height="50" viewBox="0 0 99.5 50"><rect x="0.8" y="0.8" width="97.9" height="48.4" rx="6.5" fill="none" stroke="#3452db" stroke-width="1.6"/></svg>
<svg class="abs" style="left:12.9px;top:12.9px" width="20.3" height="20.3" viewBox="0 0 20.3 20.3"><rect x="0" y="0" width="4.9" height="4.9" fill="#3452db"/><rect x="0" y="7.7" width="4.9" height="4.9" fill="#3452db"/><rect x="0" y="15.4" width="4.9" height="4.9" fill="#3452db"/><rect x="7.7" y="0" width="4.9" height="4.9" fill="#3452db"/><rect x="7.7" y="7.7" width="4.9" height="4.9" fill="#3452db"/><rect x="7.7" y="15.4" width="4.9" height="4.9" fill="#3452db"/><rect x="15.4" y="0" width="4.9" height="4.9" fill="#3452db"/><rect x="15.4" y="7.7" width="4.9" height="4.9" fill="#3452db"/><rect x="15.4" y="15.4" width="4.9" height="4.9" fill="#3452db"/></svg>
<svg class="abs" style="left:62px;top:14px" width="22" height="18" viewBox="0 0 22 18"><rect x="0" y="0" width="3.6" height="3.6" fill="#fff"/><rect x="6" y="0" width="16" height="3.6" fill="#fff"/><rect x="0" y="7.2" width="3.6" height="3.6" fill="#fff"/><rect x="6" y="7.2" width="16" height="3.6" fill="#fff"/><rect x="0" y="14.4" width="3.6" height="3.6" fill="#fff"/><rect x="6" y="14.4" width="16" height="3.6" fill="#fff"/></svg></div>
<div class="tbtn" style="left:1547.5px;width:50px;border:2px solid transparent;background:#fff"><svg class="abs" style="left:-2px;top:-2px" width="50" height="50" viewBox="0 0 50 50"><rect x="0.8" y="0.8" width="48.4" height="48.4" rx="6.5" fill="none" stroke="#3452db" stroke-width="1.6"/></svg><svg class="abs" style="left:12px;top:12px" width="22" height="22" viewBox="0 0 22 22"><path fill="#3452db" fill-rule="evenodd" stroke="#3452db" stroke-width="0.8" stroke-linejoin="round" d="M9.15 3.30 L9.39 0.83 L12.61 0.83 L12.85 3.30 L15.14 4.25 L17.05 2.67 L19.33 4.95 L17.75 6.86 L18.70 9.15 L21.17 9.39 L21.17 12.61 L18.70 12.85 L17.75 15.14 L19.33 17.05 L17.05 19.33 L15.14 17.75 L12.85 18.70 L12.61 21.17 L9.39 21.17 L9.15 18.70 L6.86 17.75 L4.95 19.33 L2.67 17.05 L4.25 15.14 L3.30 12.85 L0.83 12.61 L0.83 9.39 L3.30 9.15 L4.25 6.86 L2.67 4.95 L4.95 2.67 L6.86 4.25 Z M7.36 11.00 a3.638 3.638 0 1 0 7.276 0 a3.638 3.638 0 1 0 -7.276 0 Z"/></svg></div>
<div class="tbtn" style="left:1622.5px;width:578px;border:2px solid transparent;background:#fff"><svg class="abs" style="left:-2px;top:-2px" width="578" height="50" viewBox="0 0 578 50"><rect x="0.8" y="0.8" width="576.4" height="48.4" rx="6.5" fill="none" stroke="#b4bfcc" stroke-width="1.5"/></svg><span class="abs" style="left:10px;top:11px;font-size:18.67px;line-height:24px;color:#2a4653">Filter</span><svg class="abs" style="left:543px;top:15px" width="18" height="18" viewBox="0 0 18 18"><circle cx="7" cy="7" r="5.6" fill="none" stroke="#b9c0c8" stroke-width="1.3"/><path d="M11 11 L16.4 16.4" stroke="#b9c0c8" stroke-width="1.3"/></svg></div>
<div id="menu" class="abs">
<span class="mi" style="top:19.5px;letter-spacing:0.08px">Cluster Business View</span>
<svg style="left:16.6px;top:20.4px" width="25.5" height="25.5" viewBox="0 0 22 22"><g stroke="#3452db" stroke-width="1.7" stroke-linecap="round" fill="none"><path d="M4.4 3.2 L8.4 7.6 M17.4 2.4 L13.4 7.4 M14.2 12.4 L18.6 15.2 M11 14 L11 19.4 M8 12.6 L2.8 18"/><circle cx="11" cy="10" r="3.4" stroke-width="1.8"/></g><circle cx="4.2" cy="2.8" r="1.3" fill="#3452db"/><circle cx="17.8" cy="2.6" r="2.3" fill="#3452db"/><circle cx="19.2" cy="15.4" r="1.9" fill="#3452db"/><circle cx="11" cy="19.6" r="1.3" fill="#3452db"/><circle cx="2.6" cy="18.4" r="1.9" fill="#3452db"/></svg>
<span class="mi" style="top:68.3px;letter-spacing:0.1px">Predict Data</span>
<svg style="left:18px;top:69.8px" width="22" height="22" viewBox="0 0 22 22"><rect x="0.5" y="0.5" width="21" height="21" rx="1" fill="#3452db"/><g fill="#fff"><circle cx="5" cy="4.6" r="1.6"/><circle cx="5" cy="11" r="1.6"/><circle cx="5" cy="17.4" r="1.6"/><circle cx="10.4" cy="7.6" r="1.8"/><circle cx="10.6" cy="14.6" r="1.8"/><circle cx="16.4" cy="11" r="2"/></g></svg>
<span class="mi" style="top:135.0px;letter-spacing:-0.07px">Create Data Flow</span>
<svg style="left:18px;top:136.5px" width="22" height="22" viewBox="0 0 22 22"><path fill="none" stroke="#3452db" stroke-width="1.7" stroke-linecap="round" stroke-linejoin="round" d="M6.5 1.8 H3.6 A1.8 1.8 0 0 0 1.8 3.6 V18.4 A1.8 1.8 0 0 0 3.6 20.2 H18.6 A1.8 1.8 0 0 0 20.4 18.4 V15.6"/><path fill="none" stroke="#3452db" stroke-width="2.2" stroke-linecap="round" d="M6.6 8.4 C7 5.6 9 4.6 12 4.6 H16"/><path fill="#3452db" d="M14.6 0.8 L21 4.6 L14.6 8.4 Z"/></svg>
<span class="mi" style="top:184.5px;letter-spacing:-0.31px">DBMS SQL Flow</span>
<svg style="left:18px;top:186.0px" width="23" height="22" viewBox="0 0 23 22"><path fill="#3452db" d="M0.5 2.6 L18 0.6 V21.4 L0.5 19.4 Z"/><path fill="none" stroke="#3452db" stroke-width="1.4" d="M18 2.4 H20.6 V19.6 H18"/><text x="3.6" y="13.2" font-family="Liberation Sans, sans-serif" font-size="7" font-weight="700" fill="#fff">sql</text></svg>
<span class="mi" style="top:234.5px;letter-spacing:0.08px">Advanced</span>
<svg style="left:18px;top:236.0px" width="22" height="22" viewBox="0 0 22 22"><g fill="#3452db"><circle cx="11" cy="2.6" r="2.3"/><circle cx="11" cy="11" r="2.3"/><circle cx="11" cy="19.4" r="2.3"/></g></svg>
<svg style="left:287px;top:238.0px" width="11" height="18" viewBox="0 0 11 18"><path fill="#3452db" d="M0.5 0.5 L10.5 9 L0.5 17.5 Z"/></svg>
<span class="mi" style="top:299.5px;letter-spacing:0.15px">Procedure</span>
<svg style="left:19px;top:301.0px" width="19.5" height="21.5" viewBox="0 0 19.5 21.5"><path fill="#3452db" d="M3.4 0.3 H15 Q19.2 0.3 18.4 4 L14.8 17 H19 Q19 20.9 15.6 20.9 H5 Q0.6 20.9 1.4 16.6 L4.6 3.6 Q5 1.8 3.4 1.7 Z"/><path fill="none" stroke="#3452db" stroke-width="1.3" stroke-linecap="round" d="M0.7 1.0 L3.8 2.3"/><path fill="none" stroke="#aab8f2" stroke-width="0.9" d="M4.4 17.7 L14.4 17.7"/></svg>
<span class="mi" style="top:351.5px;letter-spacing:0.04px">Schedule</span>
<svg style="left:18px;top:353.0px" width="22" height="22" viewBox="0 0 22 22"><rect x="1" y="3" width="20" height="18" rx="2" fill="none" stroke="#3452db" stroke-width="1.7"/><path d="M1 7.4 H21" stroke="#3452db" stroke-width="1.7"/><path d="M6 0.8 V4.4 M16 0.8 V4.4" stroke="#3452db" stroke-width="1.8" stroke-linecap="round"/><rect x="4" y="9.6" width="2" height="2" fill="#3452db"/><rect x="4" y="12.8" width="2" height="2" fill="#3452db"/><rect x="4" y="16" width="2" height="2" fill="#3452db"/><rect x="7.6" y="9.6" width="2" height="2" fill="#3452db"/><rect x="7.6" y="12.8" width="2" height="2" fill="#3452db"/><rect x="7.6" y="16" width="2" height="2" fill="#3452db"/><rect x="11.2" y="9.6" width="2" height="2" fill="#3452db"/><rect x="11.2" y="12.8" width="2" height="2" fill="#3452db"/><rect x="11.2" y="16" width="2" height="2" fill="#3452db"/><rect x="14.8" y="9.6" width="2" height="2" fill="#3452db"/><rect x="14.8" y="12.8" width="2" height="2" fill="#3452db"/><rect x="14.8" y="16" width="2" height="2" fill="#3452db"/></svg>
<span class="mi" style="top:400.9px;letter-spacing:0.31px">Text File</span>
<svg style="left:18px;top:402.4px" width="23" height="22" viewBox="0 0 23 22"><path fill="#3452db" d="M0.5 2.5 L19 0.5 V21.5 L0.5 19.5 Z"/><path fill="none" stroke="#3452db" stroke-width="1.2" d="M19 2.5 H22 V19.5 H19"/><g fill="#fff"><rect x="3" y="5.6" width="13" height="2"/><rect x="3" y="9.8" width="13" height="2"/><rect x="3" y="14" width="6" height="2"/><rect x="11" y="14" width="2" height="2"/><rect x="14" y="14" width="2" height="2"/></g></svg>
<span class="mi" style="top:450.9px;letter-spacing:-0.1px">Upload Raw Data</span>
<svg style="left:18px;top:452.4px" width="22" height="22" viewBox="0 0 22 22"><path fill="none" stroke="#3452db" stroke-width="2.4" stroke-linejoin="round" d="M2 11 V19.8 H20 V11"/><path fill="#3452db" d="M11 0.6 L17.4 7.6 H14 V15.4 H8 V7.6 H4.6 Z"/></svg>
<span class="mi" style="top:509.5px;letter-spacing:0.24px">Application Directory</span>
<svg style="left:16.5px;top:511.0px" width="26" height="22" viewBox="0 0 26 22"><path fill="#3452db" d="M0.5 1.5 Q0.5 0.5 1.5 0.5 H9.5 L12.5 3.8 H24.5 Q25.5 3.8 25.5 4.8 V20.5 Q25.5 21.5 24.5 21.5 H1.5 Q0.5 21.5 0.5 20.5 Z"/></svg>
<span class="mi" style="top:564.0px;letter-spacing:0.43px">Tutorials</span>
<svg style="left:18.6px;top:567.9px" width="21.6" height="16.8" viewBox="0 0 23 18"><path fill="#3452db" d="M2.6 1.4 C6 0.2 9 0.8 10.8 2.4 V15.4 C9 13.8 6 13.4 2.6 14.4 Z M20.4 1.4 C17 0.2 14 0.8 12.2 2.4 V15.4 C14 13.8 17 13.4 20.4 14.4 Z"/><path fill="none" stroke="#3452db" stroke-width="1.4" d="M0.8 3.4 V16.4 C5 15.4 9 15.6 11.5 17.2 C14 15.6 18 15.4 22.2 16.4 V3.4"/></svg>
<div class="sep" style="top:113.30000000000001px"></div>
<div class="sep" style="top:277.20000000000005px"></div>
<div class="sep" style="top:491.79999999999995px"></div>
<div class="sep" style="top:549.3px"></div>
</div>
<div id="side" class="abs">
<div class="abs" style="left:24.5px;top:32.5px;width:50px;height:50px;border-radius:50%;background:linear-gradient(135deg,#9fb0ee 0%,#6f8be6 40%,#3f5fdc 100%)"><svg class="abs" style="left:12px;top:12px" width="26" height="26" viewBox="0 0 26 26"><path d="M13 2.5 V23.5 M2.5 13 H23.5" stroke="#fff" stroke-width="5.4" stroke-linecap="round"/></svg></div>
<div class="abs" style="left:37px;top:114px;width:25px;height:2.5px;background:#ededed"></div>
<svg class="abs" style="left:33px;top:154px" width="32" height="28" viewBox="0 0 32 28"><path fill="none" stroke="#3452db" stroke-width="2.4" stroke-linejoin="miter" d="M1.5 15 L16 2 L30.5 15"/><path fill="#3452db" d="M24 4 H27 V10.5 L24 8 Z"/><path fill="#3452db" d="M5 14.6 L16 5 L27 14.6 V27.5 H19.6 V18.6 H12.4 V27.5 H5 Z"/></svg>
<svg class="abs" style="left:33px;top:240px" width="32" height="30" viewBox="0 0 32 30"><path fill="none" stroke="#3452db" stroke-width="3" d="M9 20.4 H2 V2 H11.5 L14.6 5.6 H26.6 V13.6"/><g fill="#3452db"><rect x="13.6" y="16" width="3.2" height="10"/><rect x="20.2" y="11" width="3.2" height="15"/><rect x="26.6" y="20.4" width="3.2" height="5.6"/><rect x="11.6" y="27.6" width="19.6" height="1.8"/></g></svg>
<div class="abs" style="left:11.8px;top:300px;width:75px;height:75px;border-radius:50%;background:#010040"><svg class="abs" style="left:23.2px;top:22.8px" width="30" height="31" viewBox="0 0 30 31"><path fill="none" stroke="#fff" stroke-width="2.8" d="M11 20 H2 V2 H11 L14.4 5.8 H26.4 V11"/><g fill="#fff"><ellipse cx="20.8" cy="15.6" rx="7" ry="2.9"/><path d="M13.8 18 C15 20.4 26.6 20.4 27.8 18 V21.6 C26.6 24 15 24 13.8 21.6 Z"/><path d="M13.8 23.6 C15 26 26.6 26 27.8 23.6 V27 C26.6 29.8 15 29.8 13.8 27 Z"/></g></svg></div>
<svg class="abs" style="left:36.6px;top:403.6px" width="26.4" height="27" viewBox="0 0 26.4 27"><rect x="0.2" y="0.2" width="26" height="22" rx="1.6" fill="#3452db"/><rect x="0.2" y="17.3" width="26" height="2.2" fill="#a5b5f0"/><g fill="none" stroke="#fff" stroke-width="1.1" stroke-linejoin="round"><path d="M2.4 5.4 L6 2.4 L9.6 5.4 M3.4 5.8 V9 H8.6 V5.8"/><circle cx="6" cy="13.2" r="2.7"/><path d="M6 10.5 V13.2 L8.2 14.8 M6 13.2 L3.8 14.8"/><path d="M12.6 15.6 V11.4 M12.6 14.4 L15 12.6 L17.4 13.8 L20 11.8 L23.6 10.6"/></g><g fill="#fff" opacity="0.85"><rect x="12.2" y="6.6" width="12" height="1.9"/><rect x="13" y="3.4" width="1.8" height="3.4"/><rect x="15.8" y="2.4" width="1.8" height="4.4"/><rect x="18.6" y="4.2" width="1.8" height="2.6"/><rect x="21.4" y="5" width="1.8" height="1.8"/></g><rect x="10.8" y="22.2" width="5" height="2.5" fill="#8ea3ec"/><rect x="6.4" y="24.6" width="13.8" height="1.5" fill="#7f97e8"/></svg>
<svg class="abs" style="left:36px;top:484px" width="30" height="30" viewBox="0 0 30 30"><g fill="#3452db"><path d="M12.4 0.6 C15.6 0.6 17.6 2.8 17.4 6 C17.2 9.6 15.2 12.6 12.4 12.6 C9.6 12.6 7.8 9.6 7.6 6 C7.4 2.8 9.2 0.6 12.4 0.6 Z"/><path d="M1.8 26.2 V20 C1.8 17 4 15.6 9.6 13.8 L12.4 17.4 L14.6 14.4 C13 17 11.4 22 12.6 26.2 Z"/></g><circle cx="19.2" cy="21.2" r="8" fill="#fff"/><g transform="translate(19.2 21.2)" fill="#3452db"><rect x="-1.25" y="-6.5" width="2.5" height="3" transform="rotate(0)"/><rect x="-1.25" y="-6.5" width="2.5" height="3" transform="rotate(45)"/><rect x="-1.25" y="-6.5" width="2.5" height="3" transform="rotate(90)"/><rect x="-1.25" y="-6.5" width="2.5" height="3" transform="rotate(135)"/><rect x="-1.25" y="-6.5" width="2.5" height="3" transform="rotate(180)"/><rect x="-1.25" y="-6.5" width="2.5" height="3" transform="rotate(225)"/><rect x="-1.25" y="-6.5" width="2.5" height="3" transform="rotate(270)"/><rect x="-1.25" y="-6.5" width="2.5" height="3" transform="rotate(315)"/><circle r="4.7"/></g><circle cx="19.2" cy="21.2" r="2.1" fill="#fff"/></svg>
<svg class="abs" style="left:35px;top:568px" width="34" height="34" viewBox="0 0 34 34"><circle cx="13.6" cy="13.6" r="11.2" fill="none" stroke="#3452db" stroke-width="3.1"/><path d="M21.8 21.8 L30.6 30.8" stroke="#3452db" stroke-width="3.4" stroke-linecap="round"/></svg>
</div>
<div id="foot" class="abs"><span>Copyright © 2021. TIBCO Software Inc. All rights reserved.</span></div>
</body></html>
